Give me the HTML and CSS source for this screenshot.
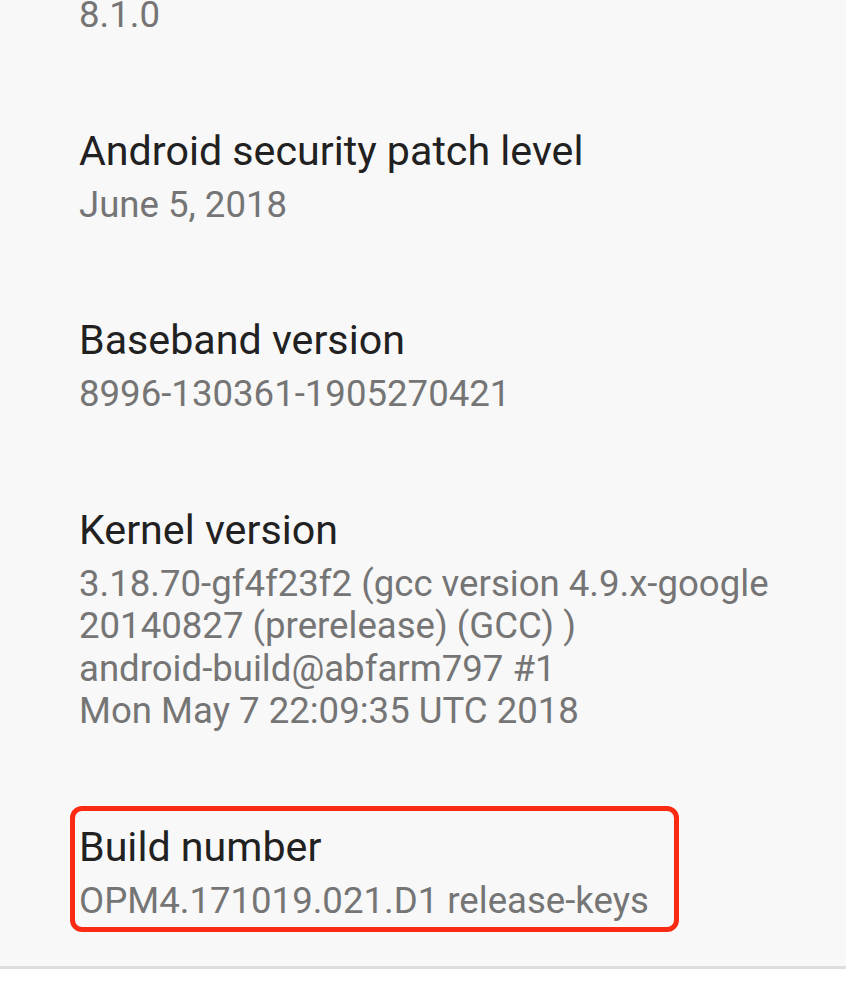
FILE: index.html
```html
<!DOCTYPE html>
<html>
<head>
<meta charset="utf-8">
<link rel="stylesheet" href="styles.css">
</head>
<body>
<div class="screen">
  <div class="list">
    <div class="row row-partial">
      <div class="summary">8.1.0</div>
    </div>
    <div class="row">
      <div class="title">Android security patch level</div>
      <div class="summary">June 5, 2018</div>
    </div>
    <div class="row">
      <div class="title">Baseband version</div>
      <div class="summary">8996-130361-1905270421</div>
    </div>
    <div class="row">
      <div class="title">Kernel version</div>
      <div class="summary">3.18.70-gf4f23f2 (gcc version 4.9.x-google<br>20140827 (prerelease) (GCC) )<br>android-build@abfarm797 #1<br>Mon May 7 22:09:35 UTC 2018</div>
    </div>
    <div class="row row-highlight">
      <div class="title">Build number</div>
      <div class="summary">OPM4.171019.021.D1 release-keys</div>
      <div class="highlight"></div>
    </div>
  </div>
  <div class="divider"></div>
</div>
</body>
</html>
```

FILE: styles.css
```css
html, body {
  margin: 0;
  padding: 0;
  background: #ffffff;
}
.screen {
  width: 846px;
  height: 988px;
  overflow: hidden;
  background: #ffffff;
  font-family: Roboto, "Noto Sans", sans-serif;
}
.list {
  background: #f8f8f8;
  display: flex;
  flex-direction: column;
}
.row {
  padding: 46px 20px 44px 79px;
}
.row-partial {
  padding-top: 0;
}
.row-partial .summary {
  margin-top: -6px;
}
.title {
  font-size: 41.2px;
  line-height: 48px;
  color: #212121;
}
.summary {
  margin-top: 9px;
  font-size: 36.6px;
  line-height: 42.5px;
  color: #757575;
}
.row-highlight {
  position: relative;
}
.highlight {
  position: absolute;
  left: 70px;
  top: 29px;
  width: 599px;
  height: 116px;
  border: 5px solid #fb2a12;
  border-radius: 12px;
}
.divider {
  height: 3px;
  background: #dedede;
}
```
